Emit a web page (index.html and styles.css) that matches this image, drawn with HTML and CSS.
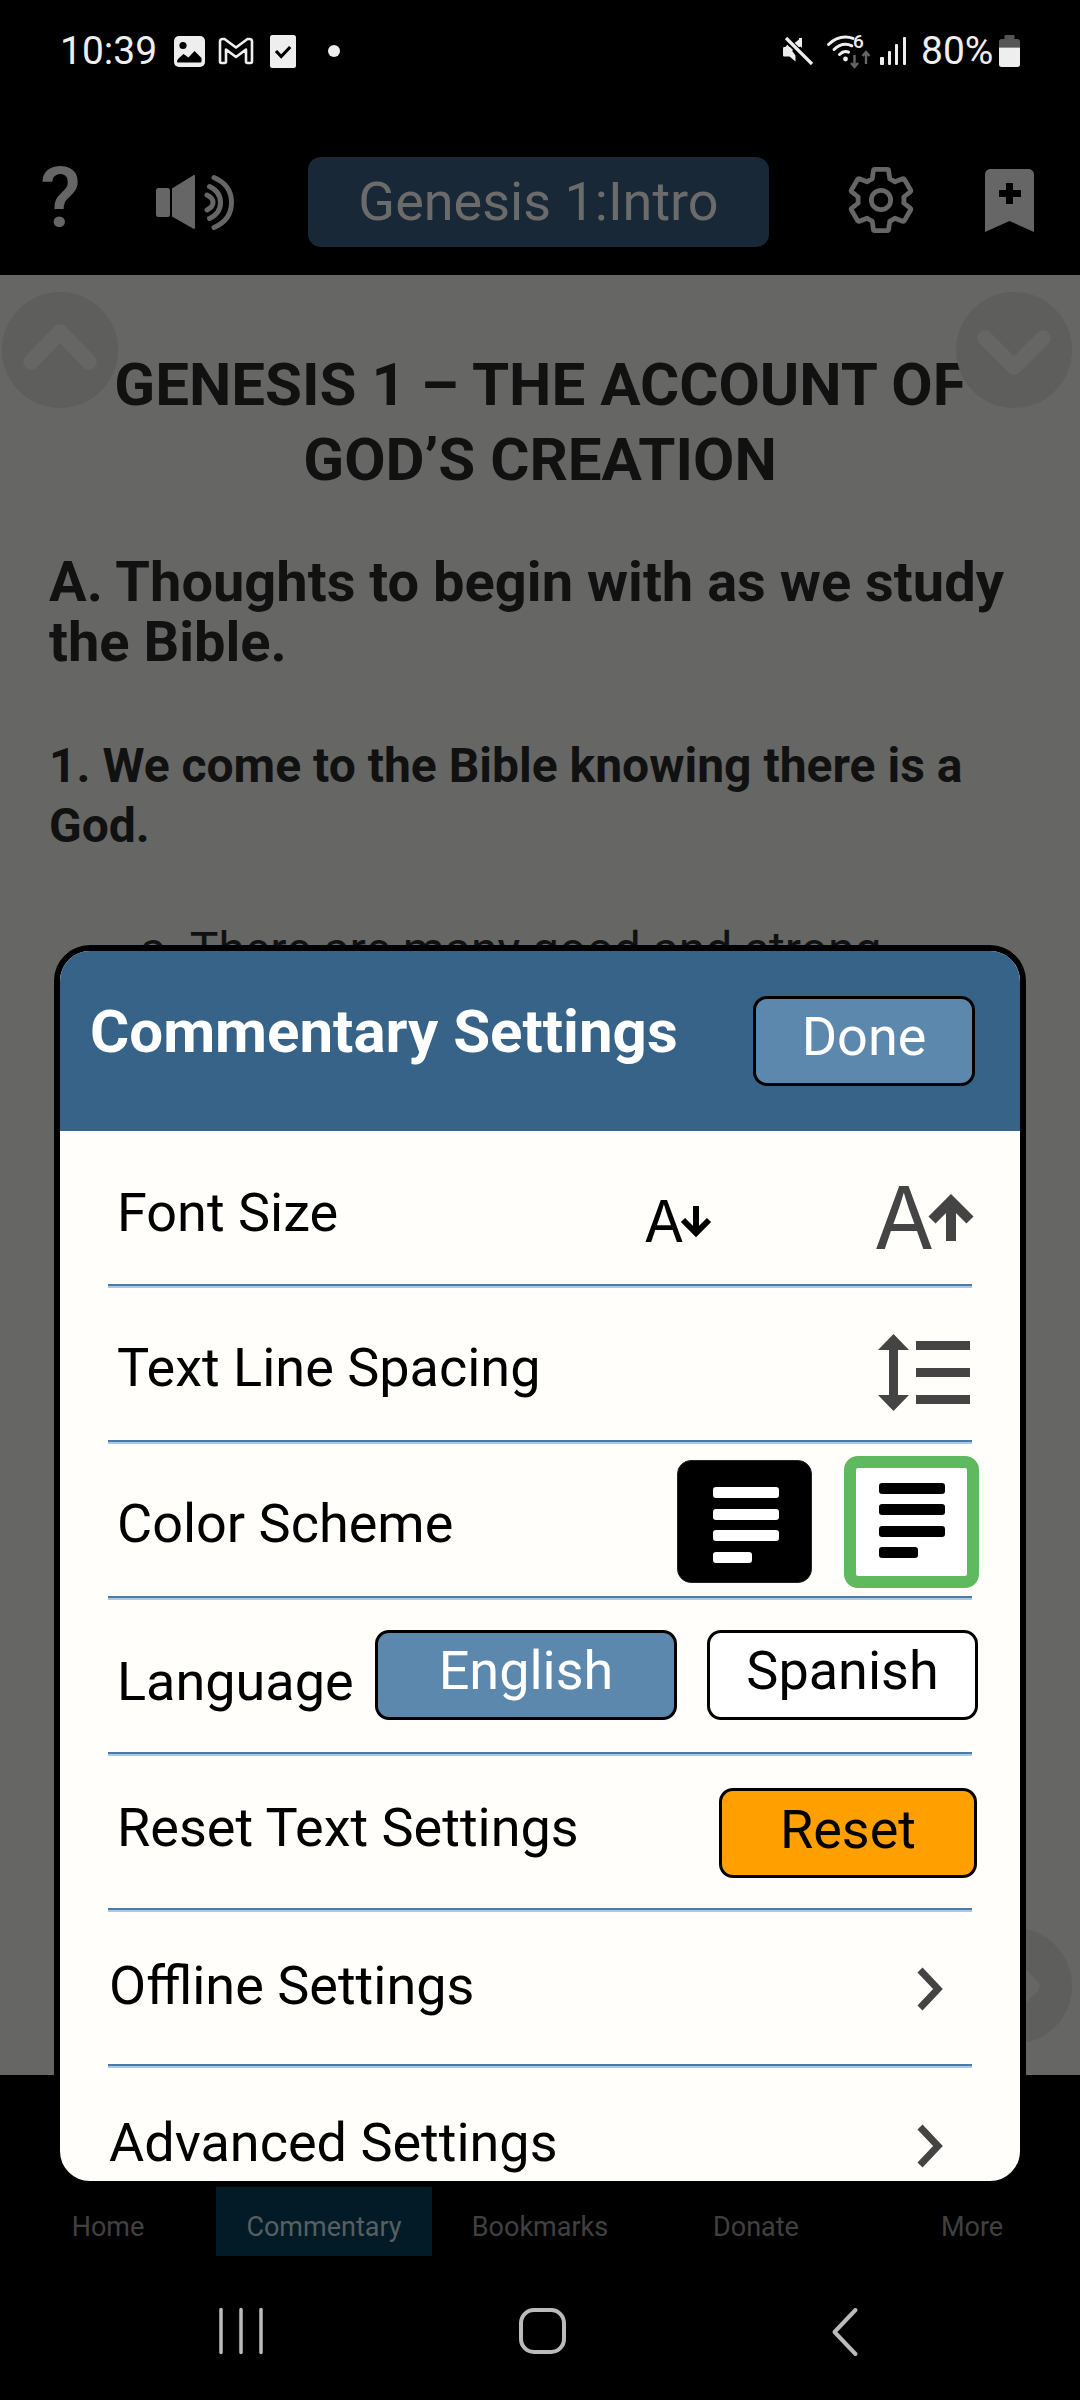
FILE: index.html
```html
<!DOCTYPE html>
<html lang="en">
<head>
<meta charset="utf-8">
<title>Commentary Settings</title>
<link rel="stylesheet" href="styles.css">
</head>
<body>
<div class="screen">
  <div class="status">
    <span class="clock">10:39</span>
    <svg class="st-gallery" viewBox="0 0 31 31"><rect width="31" height="31" rx="5" fill="#eee"/><circle cx="9" cy="9.5" r="3.6" fill="#000"/><path d="M3 26.500c0-2 .5-3 1.500-4l5-4.500 5 3.500 6-6.500 7 7v3c0 1-.5 1.500-1.500 1.500h-21.500c-1 0-1.500-.5-1.500-.5z" fill="#000"/></svg>
    <svg class="st-mail" viewBox="0 0 36 28"><path d="M2 4.500c0-1.500 1-2.500 2.500-2.500h2l11.500 8.500 11.500-8.500h2c1.500 0 2.500 1 2.500 2.500v20c0 1-.5 1.500-1.500 1.500h-3c-1 0-1.500-.5-1.500-1.500v-12l-10 7.500-10-7.500v12c0 1-.5 1.500-1.500 1.500h-3c-1 0-1.500-.5-1.500-1.500z" fill="none" stroke="#eee" stroke-width="2.600" stroke-linejoin="round"/></svg>
    <svg class="st-check" viewBox="0 0 26 33"><rect width="26" height="33" rx="2.500" fill="#eee"/><path d="M6 16l5.200 5.500 9-9.500" fill="none" stroke="#000" stroke-width="3.200"/></svg>
    <span class="st-dot"></span>
    <span class="st-spacer"></span>
    <svg class="st-mute" viewBox="0 0 30 28"><path d="M0 11.500c0-1 .5-1.500 1.500-1.500h5l12-9.500v8.500l-18 9z" fill="#eee"/><path d="M0 13l0 5c0 1 .5 1.500 1.500 1.500h5l6 5v-6l-8-11z" fill="#eee"/><path d="M16 1v7l3 3v-10z" fill="#eee"/><path d="M2 1l27 26" stroke="#000" stroke-width="6"/><path d="M3 1l26 26" stroke="#eee" stroke-width="3.200"/></svg>
    <svg class="st-wifi" viewBox="0 0 44 32"><g fill="none" stroke="#eee" stroke-width="3" stroke-linecap="round"><path d="M1.500 9.500c5-5 10.500-7.500 17-7.500 2.500 0 5 .4 7.500 1.400"/><path d="M7 14.500c3.500-3.500 7.500-5.200 11.500-5.200 2.300 0 4.300.5 6.300 1.500"/><path d="M12.500 19.500c2-2 4-3 6-3 1 0 2 .2 3 .7"/></g><circle cx="18.500" cy="24" r="2.400" fill="#eee"/><text class="st-six" x="26" y="13">6</text><path d="M27.500 20v12m-3.500-4l3.500 4 3.500-4M39 29v-12m-3.500 4l3.500-4 3.500 4" fill="none" stroke="#666" stroke-width="2.400"/></svg>
    <svg class="st-signal" viewBox="0 0 27 28"><g fill="#eee"><rect x="0" y="20" width="4" height="8" rx="1"/><rect x="8" y="14" width="3" height="14" rx="1"/><rect x="15" y="7" width="3" height="21" rx="1"/><rect x="23" y="0" width="3" height="28" rx="1"/></g></svg>
    <span class="pct">80%</span>
    <svg class="st-batt" viewBox="0 0 21 32"><path d="M6.500 0h8c.6 0 1 .4 1 1v3h3c1.500 0 2.500 1 2.500 2.500v6h-21v-6c0-1.500 1-2.500 2.500-2.500h3v-3c0-.6.4-1 1-1z" fill="#555"/><path d="M0 12.500h21v17c0 1.500-1 2.500-2.500 2.500h-16c-1.500 0-2.500-1-2.500-2.500z" fill="#eee"/></svg>
  </div>

  <div class="topbar">
    <span class="help">?</span>
    <svg class="speaker" viewBox="0 0 80 54" fill="#666"><rect x="1" y="13" width="14" height="29" rx="2.500"/><path d="M17 13.500l21-13c1.300-.8 2-.3 2 1v51c0 1.300-.7 1.800-2 1l-21-12z"/><g fill="none" stroke="#666" stroke-width="5" stroke-linecap="round"><path d="M52 20c4 2 6 4.500 6 7.500s-2 5.500-6 7.500"/><path d="M54.500 11.500c7.500 3.500 11 9 11 16s-3.500 12.500-11 16"/><path d="M59 2.500c11.500 5 17.500 13.500 17.500 25s-6 20-17.500 25"/></g></svg>
    <div class="pill">Genesis 1:Intro</div>
    <svg class="gear" viewBox="2 2 20 20"><path d="M19.430 12.980c.04-.32.07-.64.07-.98 0-.34-.03-.66-.07-.98l2.110-1.650c.19-.15.24-.42.12-.64l-2-3.460c-.12-.22-.39-.3-.61-.22l-2.490 1c-.52-.4-1.080-.73-1.690-.98l-.38-2.650C14.460 2.180 14.250 2 14 2h-4c-.25 0-.46.18-.49.42l-.38 2.650c-.61.25-1.170.59-1.690.98l-2.490-1c-.23-.09-.49 0-.61.22l-2 3.460c-.13.22-.07.49.12.64l2.110 1.650c-.04.32-.07.65-.07.98 0 .33.03.66.07.98l-2.110 1.650c-.19.15-.24.42-.12.64l2 3.460c.12.22.39.3.61.22l2.490-1c.52.4 1.080.73 1.690.98l.38 2.650c.03.24.24.42.49.42h4c.25 0 .46-.18.49-.42l.38-2.650c.61-.25 1.170-.59 1.690-.98l2.490 1c.23.09.49 0 .61-.22l2-3.460c.12-.22.07-.49-.12-.64l-2.110-1.650z" transform="translate(12 12) scale(.9) translate(-12 -12)" fill="none" stroke="#666" stroke-width="1.550" stroke-linejoin="round"/><circle cx="12" cy="12" r="2.850" fill="none" stroke="#666" stroke-width="1.400"/></svg>
    <svg class="bookmark" viewBox="0 0 49 63"><path d="M0 6c0-3.500 2-6 6-6h37c4 0 6 2.500 6 6v57l-24.500-11-24.500 11z" fill="#666"/><path d="M21 14h7v7h8v7h-8v7h-7v-7h-7v-7h7z" fill="#000"/></svg>
  </div>

  <main class="content">
    <h1 class="title">GENESIS 1 – THE ACCOUNT OF GOD’S CREATION</h1>
    <h2 class="h-a">A. Thoughts to begin with as we study the Bible.</h2>
    <h3 class="h-b">1. We come to the Bible knowing there is a God.</h3>
    <p class="item">a. There are many good and strong</p>
    <div class="round round-up"><svg viewBox="0 0 116 116"><polyline points="29,70 58,40 87,70"/></svg></div>
    <div class="round round-down"><svg viewBox="0 0 116 116"><polyline points="29,46 58,75 87,46"/></svg></div>
    <div class="round round-next"><svg viewBox="0 0 116 116"><polyline points="46,29 76,58 46,87"/></svg></div>
  </main>

  <nav class="tabs">
    <span class="tab">Home</span>
    <span class="tab tab-on">Commentary</span>
    <span class="tab">Bookmarks</span>
    <span class="tab">Donate</span>
    <span class="tab">More</span>
  </nav>

  <div class="sysnav">
    <svg class="sys-recent" viewBox="0 0 44 46"><path d="M2 1.500v43M22 1.500v43M42 1.500v43" stroke="#bbb" stroke-width="3.500" stroke-linecap="round"/></svg>
    <svg class="sys-home" viewBox="0 0 47 46"><rect x="2" y="2" width="43" height="42" rx="13" fill="none" stroke="#bbb" stroke-width="4"/></svg>
    <svg class="sys-back" viewBox="0 0 26 48"><path d="M23.500 2l-21 22 21 22" fill="none" stroke="#bbb" stroke-width="4" stroke-linecap="round" stroke-linejoin="round"/></svg>
  </div>

  <section class="modal">
    <header class="modal-head">
      <h2 class="modal-title">Commentary Settings</h2>
      <button class="btn btn-done">Done</button>
    </header>
    <div class="row">
      <span class="label">Font Size</span>
      <svg class="ic-small" viewBox="0 0 66 42"><text class="ic-a" x="-1" y="42">A</text><path d="M51 6v27M38 20l13 13 13-13" fill="none" stroke="#000" stroke-width="6"/></svg>
      <svg class="ic-big" viewBox="0 0 100 63"><text class="ic-a-big" x="0" y="63">A</text><path d="M77 55V16M58 34l19-19 19 19" fill="none" stroke="#444" stroke-width="10"/></svg>
    </div>
    <div class="row">
      <span class="label">Text Line Spacing</span>
      <svg class="ic-spacing" viewBox="0 0 92 77" fill="#444"><path d="M15.500 0l15.500 16h-11v45h11l-15.500 16-15.500-16h11v-45h-11z"/><rect x="38" y="7" width="54" height="9"/><rect x="38" y="34" width="54" height="9"/><rect x="38" y="61" width="54" height="9"/></svg>
    </div>
    <div class="row">
      <span class="label">Color Scheme</span>
      <div class="scheme scheme-dark"><i></i><i></i><i></i><i class="short"></i></div>
      <div class="scheme scheme-light"><i></i><i></i><i></i><i class="short"></i></div>
    </div>
    <div class="row">
      <span class="label label-lang">Language</span>
      <button class="btn btn-lang btn-on">English</button>
      <button class="btn btn-lang">Spanish</button>
    </div>
    <div class="row">
      <span class="label label-reset">Reset Text Settings</span>
      <button class="btn btn-reset">Reset</button>
    </div>
    <div class="row row-link">
      <span class="label">Offline Settings</span>
      <svg class="chev" viewBox="0 0 27 44"><path d="M4 3l18 19-18 19" fill="none" stroke="#444" stroke-width="7"/></svg>
    </div>
    <div class="row row-link row-last">
      <span class="label">Advanced Settings</span>
      <svg class="chev" viewBox="0 0 27 44"><path d="M4 3l18 19-18 19" fill="none" stroke="#444" stroke-width="7"/></svg>
    </div>
  </section>
</div>
</body>
</html>
```
FILE: styles.css
```css
* { box-sizing: border-box; }
html, body { margin: 0; padding: 0; background: #000; }
body { font-family: Roboto, "Noto Sans", sans-serif; }
svg { display: block; flex: none; overflow: visible; }

.screen {
  position: relative;
  width: 1080px;
  height: 2400px;
  overflow: hidden;
  display: flex;
  flex-direction: column;
  background: #000;
}

/* status bar */
.status {
  height: 102px;
  flex: none;
  display: flex;
  align-items: center;
  padding-left: 60px;
  color: #eee;
}
.clock { font-size: 39px; width: 114px; line-height: 1; }
.st-gallery { width: 31px; height: 31px; }
.st-mail { width: 36px; height: 28px; margin-left: 13px; }
.st-check { width: 26px; height: 33px; margin-left: 16px; }
.st-dot { width: 12px; height: 12px; border-radius: 50%; background: #eee; margin-left: 32px; }
.st-spacer { flex: 1; }
.st-mute { width: 30px; height: 28px; }
.st-wifi { width: 44px; height: 32px; margin-left: 14px; margin-top: 0; }
.st-six { font-family: Roboto, sans-serif; font-size: 19px; font-weight: 500; fill: #eee; }
.st-signal { width: 27px; height: 28px; margin-left: 9px; }
.pct { font-size: 39px; line-height: 1; margin-left: 14px; width: 78px; }
.st-batt { width: 21px; height: 32px; margin-right: 60px; }

/* top bar */
.topbar {
  height: 173px;
  flex: none;
  display: flex;
  align-items: center;
  padding: 55px 0 28px 40px;
  color: #666;
}
.help { width: 40px; font-size: 84px; font-weight: 500; line-height: 90px; text-align: center; margin-top: -6px; }
.speaker { width: 80px; height: 54px; margin-left: 75px; }
.pill {
  width: 461px;
  height: 90px;
  margin-left: 73px;
  border-radius: 13px;
  background: #182836;
  color: #6b6b6b;
  font-size: 54px;
  line-height: 90px;
  text-align: center;
}
.gear { width: 68px; height: 68px; margin-left: 78px; margin-top: -5px; }
.bookmark { width: 49px; height: 63px; margin-left: 70px; margin-top: -4px; }

/* page under the dialog */
.content {
  position: relative;
  height: 1800px;
  flex: none;
  overflow: hidden;
  background: #666664;
  color: #111;
  padding: 72px 49px 0;
}
.title { margin: 0; font-size: 60px; line-height: 75px; font-weight: 700; text-align: center; }
.h-a { margin: 55px 0 0; font-size: 56px; line-height: 60px; font-weight: 700; }
.h-b { margin: 64px 0 0; font-size: 48px; line-height: 60px; font-weight: 700; }
.item { margin: 64px 0 0 91px; font-size: 48px; line-height: 60px; }
.round {
  position: absolute;
  width: 116px;
  height: 116px;
  border-radius: 50%;
  background: #5e5e5c;
}
.round svg { width: 116px; height: 116px; }
.round polyline { fill: none; stroke: #666664; stroke-width: 15.500; stroke-linecap: round; stroke-linejoin: round; }
.round-up { left: 2px; top: 17px; }
.round-down { left: 956px; top: 17px; }
.round-next { left: 956px; top: 1653px; }

/* bottom tabs */
.tabs {
  flex: none;
  display: grid;
  grid-template-columns: repeat(5, 216px);
  padding-top: 112px;
  height: 181px;
}
.tab {
  height: 69px;
  padding-top: 20px;
  text-align: center;
  font-size: 27px;
  line-height: 40px;
  color: #404040;
}
.tab-on { background: #021b26; color: #565f63; }

/* system nav */
.sysnav { flex: 1; position: relative; display: flex; align-items: flex-start; padding-top: 52px; }
.sys-recent { width: 44px; height: 46px; margin-left: 219px; }
.sys-home { width: 47px; height: 46px; margin-left: 256px; }
.sys-back { width: 26px; height: 48px; margin-left: 266px; }

/* dialog */
.modal {
  position: absolute;
  left: 54px;
  top: 945px;
  width: 972px;
  height: 1242px;
  border: 6px solid #000;
  border-radius: 36px;
  overflow: hidden;
  background: #fffefa;
}
.modal-head {
  height: 180px;
  display: flex;
  align-items: flex-start;
  justify-content: space-between;
  padding: 45px 45px 0 30px;
  background: #366387;
}
.modal-title { margin: 1px 0 0; font-size: 60px; line-height: 70px; font-weight: 700; color: #fff; }
.btn {
  font-family: Roboto, sans-serif;
  border: 3px solid #000;
  border-radius: 14px;
  padding: 0;
  color: #000;
  background: #fff;
  font-size: 54px;
  line-height: 1;
}
.btn-done { width: 222px; height: 90px; background: #5d88ad; color: #fff; padding-bottom: 8px; }
.row {
  height: 156px;
  margin: 0 48px;
  display: flex;
  align-items: center;
  border-bottom: 2px solid #4a7ba6;
  box-shadow: 0 2px 0 #a9c9e6;
  padding-left: 9px;
  color: #000;
}
.modal-head + .row { height: 155px; }
.label { font-size: 54px; line-height: 70px; margin-right: auto; padding-top: 10px; }
.ic-small { width: 66px; height: 42px; margin: 26px 163px 0 0; }
.ic-a { font-family: Inter, sans-serif; font-size: 58px; fill: #000; }
.ic-big { width: 100px; height: 63px; margin: 19px -2px 0 0; }
.ic-a-big { font-family: Inter, sans-serif; font-size: 87px; fill: #444; }
.ic-spacing { width: 92px; height: 77px; margin: 19px 2px 0 0; }
.scheme {
  display: flex;
  flex-direction: column;
  width: 135px;
  gap: 10.500px;
}
.scheme i { display: block; height: 11px; width: 66px; border-radius: 3px; }
.scheme i.short { width: 39px; }
.scheme-dark {
  height: 123px;
  margin-top: 5px;
  padding: 26px 0 0 35px;
  background: #000;
  border: 1.500px solid #222;
  border-radius: 14px;
  margin-right: 32px;
}
.scheme-dark i { background: #fff; }
.scheme-light {
  height: 132px;
  margin-top: 5px;
  padding: 15px 0 0 23px;
  background: #fff;
  border: 12px solid #5eb95f;
  border-radius: 14px;
  margin-right: -7px;
}
.scheme-light i { background: #000; }
.btn-lang { width: 302px; height: 90px; margin-left: 30px; padding-bottom: 8px; }
.btn-lang:last-child { width: 271px; margin-right: -6px; }
.btn-on { background: #5d88ad; color: #fff; }
.label-lang { margin-right: 0; width: 228px; flex: none; padding-top: 14px; }
.label-reset { padding-top: 0; padding-bottom: 6px; }
.btn-reset { width: 258px; height: 90px; background: #ff9f00; margin: 3px -5px 0 0; padding-bottom: 6px; }
.row-link { padding-left: 1px; }
.row-link .label { padding-top: 0; padding-bottom: 3px; }
.chev { width: 27px; height: 44px; margin: 4px 29px 0 0; }
.row-last { border-bottom: 0; box-shadow: none; }
```
